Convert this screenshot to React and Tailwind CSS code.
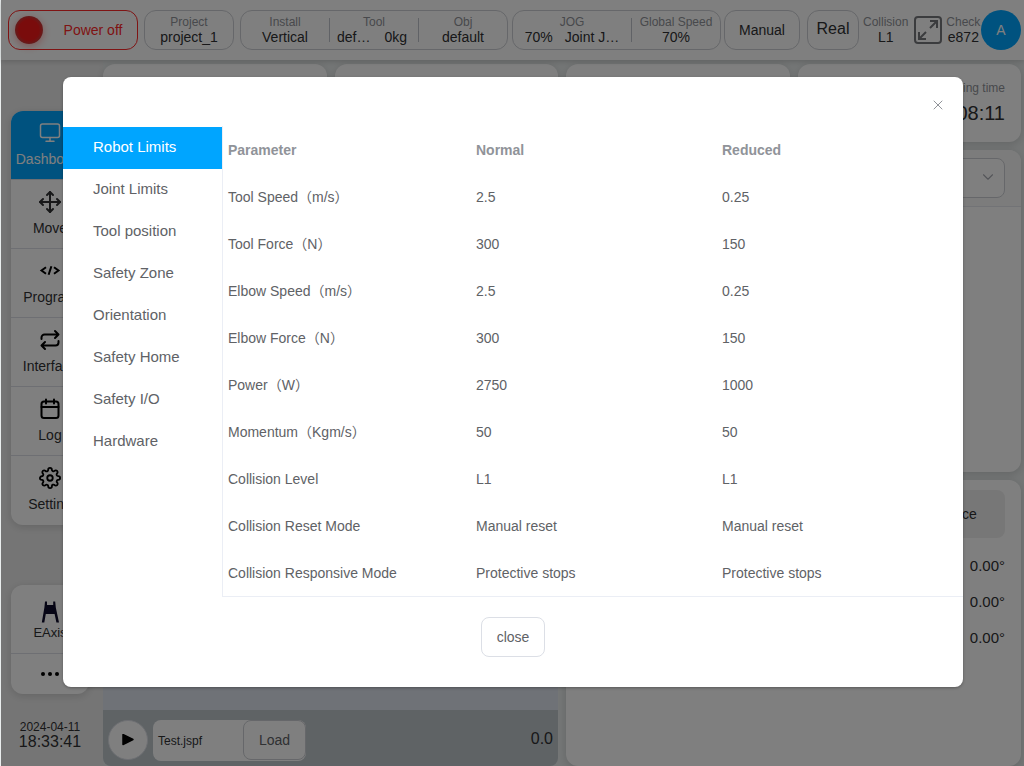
import React, { useState } from 'react';
import { Move, X, ChevronDown } from 'lucide-react';
import { FiSettings } from 'react-icons/fi';

const TABS = [
  'Robot Limits', 'Joint Limits', 'Tool position', 'Safety Zone',
  'Orientation', 'Safety Home', 'Safety I/O', 'Hardware'
];

const ROWS = [
  ['Tool Speed（m/s）', '2.5', '0.25'],
  ['Tool Force（N）', '300', '150'],
  ['Elbow Speed（m/s）', '2.5', '0.25'],
  ['Elbow Force（N）', '300', '150'],
  ['Power（W）', '2750', '1000'],
  ['Momentum（Kgm/s）', '50', '50'],
  ['Collision Level', 'L1', 'L1'],
  ['Collision Reset Mode', 'Manual reset', 'Manual reset'],
  ['Collision Responsive Mode', 'Protective stops', 'Protective stops'],
];

const MonitorIcon = () => (
  <svg className="w-6 h-6" viewBox="0 0 24 24" fill="none" stroke="currentColor" strokeWidth="1.5" strokeLinecap="round">
    <rect x="2.5" y="3" width="19" height="13.5" rx="2" />
    <path d="M12 16.5v3.5M8 20.3h8" />
  </svg>
);

const CodeIcon = () => (
  <svg className="w-6 h-6" viewBox="0 0 24 24" fill="none" stroke="currentColor" strokeWidth="2">
    <path d="M8 8.2 3.5 11.5 8 14.8M16 8.2l4.5 3.3-4.5 3.3M13.4 7.2l-2.8 8.6" />
  </svg>
);

const RepeatIcon = () => (
  <svg className="w-6 h-6" viewBox="0 0 24 24" fill="none" stroke="currentColor" strokeWidth="2" strokeLinecap="round" strokeLinejoin="round">
    <path d="M17 3l3.5 3.5L17 10M20 6.5H6.5a3 3 0 0 0-3 3V11" />
    <path d="M7 14l-3.5 3.5L7 21M4 17.5h13.5a3 3 0 0 0 3-3V13" />
  </svg>
);

const CalendarIcon = () => (
  <svg className="w-6 h-6" viewBox="0 0 24 24" fill="none" stroke="currentColor" strokeWidth="2" strokeLinecap="round">
    <rect x="3.5" y="4.5" width="17" height="16.5" rx="2.5" />
    <path d="M3.5 10h17M8 2.5v4M16 2.5v4" />
  </svg>
);

const AxisIcon = () => (
  <svg className="w-6 h-6" viewBox="0 0 24 24" fill="#0d0b2a">
    <path d="M7 1.5h2V5h6.2V1.5h2l.6 6L21 22.5h-2.6L16.6 14H7.8L6.3 22.5H3.8L6.4 7.5z" />
  </svg>
);

const FullscreenIcon = () => (
  <svg className="w-7 h-7" viewBox="0 0 28 28" fill="none" stroke="#77797d" strokeWidth="2">
    <rect x="1" y="1" width="26" height="26" rx="3" />
    <path d="M16 5h7v7M23 5l-7 7M5 16v7h7M5 23l7-7" />
  </svg>
);

const NAV = [
  { label: 'Dashboard', icon: <MonitorIcon />, active: true },
  { label: 'Move', icon: <Move className="w-6 h-6 text-[#303133]" /> },
  { label: 'Program', icon: <CodeIcon /> },
  { label: 'Interface', icon: <RepeatIcon /> },
  { label: 'Log', icon: <CalendarIcon /> },
  { label: 'Setting', icon: <FiSettings className="w-6 h-6 p-px" /> },
];

function Stat({ label, children, className = '' }) {
  return (
    <div className={`flex flex-col items-center justify-center whitespace-nowrap ${className}`}>
      <span className="text-xs leading-[15px] text-[#909399]">{label}</span>
      <span className="text-sm leading-[15px] text-[#303133]">{children}</span>
    </div>
  );
}

const Divider = () => <div className="w-px h-6 bg-[#c0c4cc]" />;

function Header() {
  return (
    <header className="relative h-[60px] shrink-0 flex items-center pl-[7px] pr-[3px] bg-white shadow-[0_1px_6px_rgba(0,0,0,0.2)]">
      <button className="w-[130px] h-10 shrink-0 flex items-center pl-1.5 rounded-xl border border-[#ff2828] text-[#ff2828] text-sm">
        <span className="w-7 h-7 rounded-full bg-[radial-gradient(circle,#f51818_0%,#f51818_50%,#c04040_75%)] shadow-[0_2px_8px_rgba(255,30,30,0.4)]" />
        <span className="flex-1 pl-1.5 text-center">Power off</span>
      </button>
      <Stat label="Project" className="w-[90px] h-10 ml-1.5 rounded-xl border border-[#cdcfd4]">project_1</Stat>
      <div className="h-10 ml-1.5 flex items-center rounded-xl border border-[#cdcfd4]">
        <Stat label="Install" className="w-[88px]">Vertical</Stat>
        <Divider />
        <Stat label="Tool" className="w-[88px]">
          <span className="flex gap-3.5 pr-1"><span>def…</span><span>0kg</span></span>
        </Stat>
        <Divider />
        <Stat label="Obj" className="w-[88px]">default</Stat>
      </div>
      <div className="h-10 ml-1 flex items-center rounded-xl border border-[#cdcfd4]">
        <Stat label="JOG" className="w-[118px]">
          <span className="flex gap-3"><span>70%</span><span>Joint J…</span></span>
        </Stat>
        <Divider />
        <Stat label="Global Speed" className="w-[88px]">70%</Stat>
      </div>
      <button className="w-[76px] h-10 ml-[3px] rounded-xl border border-[#cdcfd4] text-sm text-[#303133]">Manual</button>
      <button className="w-[52px] h-10 ml-[7px] pb-0.5 rounded-xl border border-[#cdcfd4] text-base leading-6 text-[#303133]">Real</button>
      <Stat label="Collision" className="ml-1">L1</Stat>
      <button className="ml-1.5" aria-label="Fullscreen"><FullscreenIcon /></button>
      <Stat label="Check" className="ml-1">e872</Stat>
      <button className="w-10 h-10 ml-auto shrink-0 rounded-full bg-[#00a5ff] text-white text-sm">A</button>
    </header>
  );
}

function Sidebar() {
  return (
    <aside className="w-[102px] shrink-0 flex flex-col pl-2.5 pr-3.5 pt-[51px] pb-4 bg-[#ebebeb]">
      <nav className="rounded-xl bg-white overflow-hidden shadow-[0_2px_8px_rgba(0,0,0,0.15)] divide-y divide-[#dcdfe6]">
        {NAV.map(item => (
          <a
            key={item.label}
            href="#"
            className={`h-[69px] flex flex-col items-center gap-1 pt-2.5 text-sm ${
              item.active ? 'bg-[#00a5ff] text-white' : 'text-black'
            }`}
          >
            {item.icon}
            <span className={item.active ? 'text-white' : 'text-[#303133]'}>{item.label}</span>
          </a>
        ))}
      </nav>
      <div className="mt-auto rounded-xl bg-white shadow-[0_2px_8px_rgba(0,0,0,0.15)] divide-y divide-[#dcdfe6]">
        <button className="w-full h-[69px] flex flex-col items-center pt-[15px] text-[13px] leading-[17px] text-[#303133]">
          <AxisIcon />
          EAxis
        </button>
        <button className="w-full h-10 flex items-center justify-center gap-[3px]" aria-label="More">
          <span className="w-1 h-1 rounded-full bg-black" />
          <span className="w-1 h-1 rounded-full bg-black" />
          <span className="w-1 h-1 rounded-full bg-black" />
        </button>
      </div>
      <div className="mt-[26px] flex flex-col items-center whitespace-nowrap text-[#303133]">
        <span className="text-xs leading-[14px]">2024-04-11</span>
        <span className="text-base leading-4">18:33:41</span>
      </div>
    </aside>
  );
}

function Card({ className = '', children }) {
  return <section className={`rounded-xl bg-white shadow-[0_2px_8px_rgba(0,0,0,0.15)] ${className}`}>{children}</section>;
}

function Dashboard() {
  return (
    <main className="flex-1 flex flex-col gap-2 pt-1 pr-[3px]">
      <div className="h-[78px] grid grid-cols-4 gap-2">
        <Card />
        <Card />
        <Card />
        <Card className="flex flex-col items-end px-4 pt-4">
          <span className="text-xs text-[#909399]">Running time</span>
          <span className="mt-[3px] text-xl text-[#303133]">00:08:11</span>
        </Card>
      </div>
      <div className="flex-1 min-h-0 grid grid-cols-2 gap-2">
        <div className="flex flex-col rounded-b-lg overflow-hidden">
          <div className="flex-1 bg-[#dfe4ee]" />
          <div className="h-14 flex items-center bg-[#bec6cb] px-[5px] pt-1">
            <button className="w-10 h-10 shrink-0 flex items-center justify-center rounded-full border border-[#dcdfe6] bg-white" aria-label="Play">
              <svg className="w-3 h-3" viewBox="0 0 12 12"><path d="M1 .5v10l10-5z" stroke="#000" strokeWidth="1.5" strokeLinejoin="round" /></svg>
            </button>
            <div className="ml-[5px] flex rounded-lg bg-white">
              <span className="w-[90px] pl-[5px] pt-px text-xs leading-10 text-[#303133]">Test.jspf</span>
              <button className="w-[63px] h-10 pt-px rounded-lg border border-[#cdcfd4] text-sm text-[#606266]">Load</button>
            </div>
            <span className="ml-auto pb-0.5 text-base text-[#303133]">0.0</span>
          </div>
        </div>
        <div className="flex flex-col gap-2">
          <Card className="h-[322px] overflow-hidden">
            <div className="h-[57px] px-4 pt-2 bg-[#f8f8f8] border-b border-[#e4e7ed]">
              <div className="relative">
                <select aria-label="Program variable" className="w-full h-10 appearance-none rounded-lg border border-[#cdcfd4] bg-white" />
                <ChevronDown className="absolute right-2 top-[10px] w-[18px] h-[18px] text-[#a8abb2]" strokeWidth={1.5} />
              </div>
            </div>
          </Card>
          <Card className="flex-1 px-4 pt-2.5">
            <div className="flex justify-end rounded-lg bg-[#efefef]">
              <button className="w-24 h-12 text-sm text-[#303133]">Space</button>
            </div>
            <ul className="pt-2.5 text-right text-[15px] leading-9 text-[#303133]">
              <li>0.00°</li>
              <li>0.00°</li>
              <li>0.00°</li>
            </ul>
          </Card>
        </div>
      </div>
    </main>
  );
}

function SafetyDialog() {
  const [tab, setTab] = useState('Robot Limits');

  return (
    <div role="dialog" aria-label="Safety parameters" className="w-[900px] rounded-lg bg-white shadow-[0_1px_3px_rgba(0,0,0,0.3)]">
      <div className="h-[49px] flex justify-end items-end pr-[17px] pb-[13px]">
        <button aria-label="Close dialog" className="text-[#909399]">
          <X className="w-4 h-4" strokeWidth={1.5} />
        </button>
      </div>
      <div className="flex">
        <nav className="w-[159px] shrink-0 pt-px">
          {TABS.map(t => (
            <button
              key={t}
              onClick={() => setTab(t)}
              className={`block w-full h-[42px] pl-[30px] pb-0.5 text-left text-[15px] ${
                tab === t ? 'bg-[#00a5ff] text-white' : 'text-[#606266]'
              }`}
            >
              {t}
            </button>
          ))}
        </nav>
        <div className="flex-1 border-l border-b border-[#ebeef5]">
          <table className="w-full table-fixed text-left text-sm text-[#606266]">
            <thead>
              <tr className="h-[47px] text-[#909399]">
                <th className="w-[248px] pl-[5px] font-bold">Parameter</th>
                <th className="pl-[5px] font-bold">Normal</th>
                <th className="pl-[5px] font-bold">Reduced</th>
              </tr>
            </thead>
            <tbody>
              {ROWS.map(([name, normal, reduced]) => (
                <tr key={name} className="h-[47px]">
                  <td className="pl-[5px]">{name}</td>
                  <td className="pl-[5px]">{normal}</td>
                  <td className="pl-[5px]">{reduced}</td>
                </tr>
              ))}
            </tbody>
          </table>
        </div>
      </div>
      <div className="flex justify-center pt-5 pb-[30px]">
        <button className="w-16 h-10 rounded-lg border border-[#dcdfe6] text-sm text-[#606266]">close</button>
      </div>
    </div>
  );
}

export default function App() {
  return (
    <div className="relative h-screen flex flex-col overflow-hidden pl-px bg-[#e9eded] font-['Liberation_Sans','Noto_Sans_CJK_SC',sans-serif]">
      <Header />
      <div className="flex-1 min-h-0 flex">
        <Sidebar />
        <Dashboard />
      </div>
      {/* Modal */}
      <div className="absolute inset-y-0 left-px right-0 z-20 flex justify-center items-start pt-[77px] pl-px bg-black/50">
        <SafetyDialog />
      </div>
    </div>
  );
}
